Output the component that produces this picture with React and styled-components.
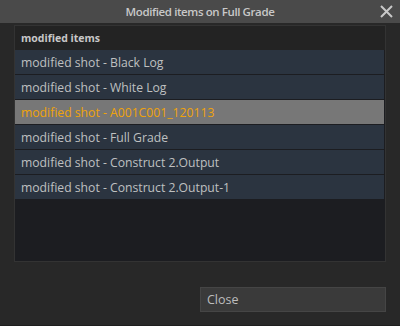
import React from 'react';
import styled, { createGlobalStyle } from 'styled-components';

const Global = createGlobalStyle`
  body { margin: 0; background: #282828; font-family: "Open Sans", "Noto Sans", sans-serif; }
`
const Window = styled.div`
  width: 400px;
  height: 326px;
  background: #282828;
  display: flex;
  flex-direction: column;
  box-sizing: border-box;
  border-bottom: 1px solid #1e1e1e;
`
const TitleBar = styled.div`
  height: 23px;
  background: #4a4a4a;
  position: relative;
  display: flex;
  align-items: center;
  justify-content: center;
  color: #c8c8c8;
  font-weight: 600;
  font-size: 11.5px;
  letter-spacing: -0.4px;
`
const CloseX = styled.div`
  position: absolute;
  right: 6px;
  top: 4px;
  width: 15px;
  height: 15px;
  display: flex;
`
const Body = styled.div`
  flex: 1;
  display: flex;
  flex-direction: column;
  padding: 2px 14px 13px 14px;
`
const Panel = styled.div`
  height: 237px;
  box-sizing: border-box;
  border: 1px solid #333333;
  background: #1c1d21;
  display: flex;
  flex-direction: column;
`
const Header = styled.div`
  height: 24px;
  background: #232323;
  color: #c8c8c8;
  font-weight: 700;
  font-size: 10.5px;
  display: flex;
  align-items: center;
  padding-left: 6px;
`
const List = styled.div`
  display: flex;
  flex-direction: column;
  gap: 1px;
  margin-right: 1px;
`
const Row = styled.div`
  height: 24px;
  display: flex;
  align-items: center;
  padding-left: 6px;
  font-size: 12.2px;
  background: ${p => p.$selected ? '#777777' : '#2b3440'};
  color: ${p => p.$selected ? '#f0a30a' : '#bfc0c0'};
`
const Footer = styled.div`
  flex: 1;
  display: flex;
  justify-content: flex-end;
  align-items: flex-end;
`
const Button = styled.button`
  width: 186px;
  height: 25px;
  box-sizing: border-box;
  background: #3a3a3a;
  border: 1px solid #454545;
  color: #bdbdbd;
  font-family: "Open Sans", "Noto Sans", sans-serif;
  font-size: 12.5px;
  text-align: left;
  padding: 0 6px;
`

const items = [
  'modified shot - Black Log',
  'modified shot - White Log',
  'modified shot - A001C001_120113',
  'modified shot - Full Grade',
  'modified shot - Construct 2.Output',
  'modified shot - Construct 2.Output-1',
]

const App = () => {
  return (
    <Window>
      <Global />
      <TitleBar>
        Modified items on Full Grade
        <CloseX>
          <svg width="15" height="15" viewBox="0 0 15 15">
            <path d="M2 2 L13 13 M13 2 L2 13" stroke="#c8c8c8" strokeWidth="2" />
          </svg>
        </CloseX>
      </TitleBar>
      <Body>
        <Panel>
          <Header>modified items</Header>
          <List>
            {items.map((t, i) => (
              <Row key={i} $selected={i === 2}>{t}</Row>
            ))}
          </List>
        </Panel>
        <Footer>
          <Button>Close</Button>
        </Footer>
      </Body>
    </Window>
  )
}

export default App;
